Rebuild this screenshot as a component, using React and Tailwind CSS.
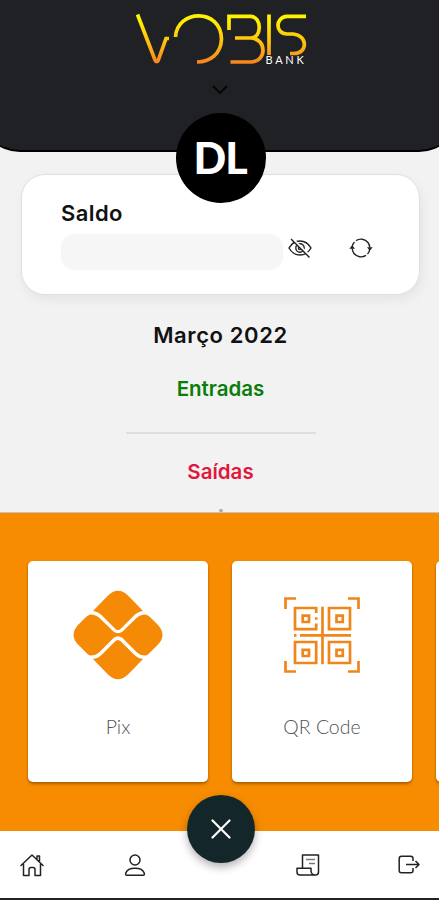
const Logo = () => (
  <div className="relative h-[66px] w-[180px]">
    <svg width="180" height="66" viewBox="130 0 180 66" fill="none" strokeWidth="3.7" stroke="url(#vobisGold)">
      <defs>
        <linearGradient id="vobisGold" gradientUnits="userSpaceOnUse" x1="0" y1="14" x2="0" y2="64">
          <stop offset="0.1" stopColor="#fff200" />
          <stop offset="0.55" stopColor="#ffc20e" />
          <stop offset="1" stopColor="#f58220" />
        </linearGradient>
      </defs>
      <path d="M137.500 14.500 L155.200 60.500 Q156.700 63 158.200 60.500 L166 38.500 H169" />
      <path d="M175.500 37 C177 9 221 8 221.500 39 C221 54 210 62 197 62" />
      <path d="M229 30 V16.400 H251 C262 17 262 38 251 38 H235 M251 38 C267 39 267 61.500 251 62 H230.500" />
      <path d="M269 14.500 V55" />
      <path d="M306 16.400 H287 C275 17 275 34 287 34 H293 C308 35 308 53.500 294 53.500 H290" />
    </svg>
    <span className="absolute top-[53px] left-[136px] font-['Lato',sans-serif] text-[11px] leading-[14px] font-normal tracking-[2.7px] text-white">BANK</span>
  </div>
);

const EyeOffIcon = () => (
  <svg width="24" height="20" viewBox="0 0 24 20" fill="none" stroke="#222" strokeWidth="1.4">
    <path d="M1 10 Q5 3 12 3 Q19 3 23 10 Q19 17 12 17 Q5 17 1 10Z" />
    <circle cx="12" cy="10" r="4.2" />
    <circle cx="12" cy="10" r="1.600" />
    <path d="M4 0.500 L22 18.500" stroke="#fff" strokeWidth="2.500" />
    <path d="M3 1 L21.500 19.500" />
  </svg>
);

const RefreshIcon = () => (
  <svg width="24" height="20" viewBox="0 0 24 20" fill="none" stroke="#222" strokeWidth="1.4">
    <path d="M3.200 9 C3.500 6.500 4.500 5 5.500 4 M7 2.600 C11 0.200 16 0.800 19 4.500 C20 6 20.700 7.500 20.800 9.500 M20.800 11 C20.500 13.500 19.500 15 18.500 16 M17 17.400 C13 19.800 8 19.200 5 15.500 C4 14 3.300 12.500 3.200 10.500" />
    <path d="M0.300 10.800 L3.200 7.200 L6 10.800Z M18 9.200 L20.800 12.800 L23.700 9.200Z" fill="#222" stroke="none" />
  </svg>
);

const PixIcon = () => (
  <svg width="90" height="90" viewBox="0 0 90 90" fill="#f58a07">
    <path d="M20 21 L34.500 6 Q45 -4.500 55.500 6 L70 21 Q65 21.500 61 25.500 L48 38.500 Q45 41.500 42 38.500 L29 25.500 Q25 21.500 20 21Z" />
    <path d="M20 69 L34.500 84 Q45 94.500 55.500 84 L70 69 Q65 68.500 61 64.500 L48 51.500 Q45 48.500 42 51.500 L29 64.500 Q25 68.500 20 69Z" />
    <path d="M17.500 24.500 Q23 24.500 26.500 28 L40.500 41.500 Q45 45 49.500 41.500 L63.500 28 Q67 24.500 72.500 24.500 Q75 25 77 27 L85 35 Q94 45 85 54.500 L77 62.500 Q75 65 72.500 65.500 Q67 65.500 63.500 62 L49.500 48 Q45 44.500 40.500 48 L26.500 62 Q23 65.500 17.500 65.500 Q15 65 13 62.500 L5 54.500 Q-4 45 5 35 L13 27 Q15 25 17.500 24.500Z" />
  </svg>
);

const QrIcon = () => (
  <svg width="76" height="76" viewBox="0 0 76 76" fill="none" stroke="#f0861a" strokeWidth="2.7">
    <path d="M1.500 12 V1.500 H12 M64 1.500 H74.500 V12 M74.500 64 V74.500 H64 M12 74.500 H1.500 V64" />
    <path d="M32.200 16 V11 H11 V32.200 H32.200 V26.500" />
    <path d="M45 11 H66 V32.200 H45Z M11 45 H32.200 V66 H11Z M45 45 H66 V66 H45Z" />
    <path d="M18.700 18.700 H25 V25 H18.700Z M52.500 18.700 H58.800 V25 H52.500Z M18.700 52.800 H25 V59 H18.700Z M52.500 52.800 H58.800 V59 H52.500Z" />
    <path d="M38.500 9.700 V67.300 M16 38.400 H67 M10 38.400 H12.500 M31 21.500 H33.500" />
  </svg>
);

const HomeIcon = () => (
  <svg width="24" height="24" viewBox="0 0 24 24" fill="none" stroke="#222" strokeWidth="1.5" strokeLinejoin="round" strokeLinecap="round">
    <path d="M1 12.500 L12 2 L23 12.500 M3.500 11 V22.500 H9 V16.500 Q9 14.500 11 14.500 H13 Q15 14.500 15 16.500 V22.500 H20.500 V11 M17 6 V3 H19.500 V8.500" />
  </svg>
);

const PersonIcon = () => (
  <svg width="22" height="24" viewBox="0 0 22 24" fill="none" stroke="#222" strokeWidth="1.5">
    <circle cx="11" cy="7" r="5" />
    <path d="M3 22.300 H19 Q21 22.300 20.200 20 C18 13.500 4 13.500 1.800 20 Q1 22.300 3 22.300Z" />
  </svg>
);

const ReceiptIcon = () => (
  <svg width="24" height="22" viewBox="0 0 24 22" fill="none" stroke="#222" strokeWidth="1.5" strokeLinejoin="round">
    <path d="M6.500 14 V1 H22.500 V18 Q22.500 21 19.500 21 H4 Q1 21 1 18 V14.300 H15 V17 Q15.500 20.800 19 21" />
    <path d="M10 5.500 H19 M13 9.500 H19" stroke="#777" />
  </svg>
);

const ExitIcon = () => (
  <svg width="23" height="20" viewBox="0 0 23 20" fill="none" stroke="#222" strokeWidth="1.5" strokeLinejoin="round">
    <path d="M15 6 V3.500 Q15 1.200 12.700 1.200 H3.500 Q1.200 1.200 1.200 3.500 V15.500 Q1.200 17.800 3.500 17.800 H12.700 Q15 17.800 15 15.500 V13" />
    <path d="M8 9.500 H21 M17.500 6 L21 9.500 L17.500 13" />
  </svg>
);

const ServiceCard = ({ label, children }) => (
  <div className="flex h-[221px] w-[180px] shrink-0 flex-col items-center rounded-[5px] bg-white shadow-[0_2px_3px_rgba(90,50,0,0.5)]">
    <div className="flex h-[147px] items-center justify-center">{children}</div>
    <p className="mt-[7px] font-['Lato',sans-serif] text-[19.5px] leading-6 font-light text-[#555]">{label}</p>
  </div>
);

export default function App() {
  return (
    <div className="flex h-[900px] w-full flex-col overflow-hidden bg-[#f2f2f2] font-['Inter','Open_Sans',sans-serif] text-[#111]">
      <header className="-mx-5 flex h-[152px] shrink-0 flex-col items-center rounded-b-[40px] border-b-2 border-black bg-[#202125]">
        <Logo />
        <svg className="mt-[19px]" width="16" height="10" viewBox="0 0 16 10" fill="none" stroke="#050505" strokeWidth="1.8">
          <path d="M1 1 L8 8 L15 1" />
        </svg>
      </header>

      {/* Avatar */}
      <div className="z-10 -mt-[39px] ml-[176px] flex h-[90px] w-[90px] shrink-0 items-center justify-center rounded-full bg-black">
        <span className="-mt-[2px] -ml-[2px] font-['Lato',sans-serif] text-[43px] leading-none font-black tracking-[-1px] text-white">DL</span>
      </div>

      {/* Balance */}
      <section className="mr-[19px] -mt-[29px] ml-[21px] h-[121px] shrink-0 rounded-[24px] border border-[#dfe1e1] bg-white pt-[24px] pl-[39px] shadow-[2px_5px_12px_rgba(0,0,0,0.06)]">
        <h2 className="text-[22px] leading-7 font-semibold tracking-[0.4px]">Saldo</h2>
        <div className="mt-[7px] flex items-center">
          <div className="h-9 w-[222px] rounded-[13px] bg-[#f6f6f6]" />
          <div className="mb-[8px] ml-[5px]"><EyeOffIcon /></div>
          <div className="mb-[8px] ml-[37px]"><RefreshIcon /></div>
        </div>
      </section>

      {/* Monthly summary */}
      <section className="flex h-[217px] shrink-0 flex-col items-center pt-[26px] pl-[2px] text-center">
        <h3 className="text-[22px] leading-7 font-semibold tracking-[0.6px]">Março 2022</h3>
        <p className="mt-[26px] text-[20.5px] leading-7 font-semibold text-[#0b7d0b]">Entradas</p>
        <hr className="mt-[29px] w-[190px] border-t-2 border-[#dedede]" />
        <p className="mt-[24px] text-[20.5px] leading-7 font-semibold text-[#e3173c]">Saídas</p>
        <span className="mt-[23px] h-[3px] w-1 rounded-full bg-[#aaa]" />
      </section>

      <section className="h-[319px] shrink-0 overflow-hidden border-t border-[#c9c2b8] bg-[#f78c00] pt-[48px] pl-[28px]">
        <div className="flex gap-6">
          <ServiceCard label="Pix"><PixIcon /></ServiceCard>
          <ServiceCard label="QR Code"><QrIcon /></ServiceCard>
          <ServiceCard label="" />
        </div>
      </section>

      <nav className="relative flex h-[69px] shrink-0 items-center justify-between border-b-2 border-[#222] bg-white pr-[18px] pl-5">
        <HomeIcon />
        <div className="ml-[50px]"><PersonIcon /></div>
        <div className="ml-[121px]"><ReceiptIcon /></div>
        <div className="ml-[48px]"><ExitIcon /></div>
        <button className="absolute -top-[36px] left-[187px] flex h-[68px] w-[68px] items-center justify-center rounded-full bg-[#13272a] shadow-[0_4px_8px_rgba(0,0,0,0.3)]">
          <svg width="20" height="20" viewBox="0 0 20 20" fill="none" stroke="#fff" strokeWidth="2.2" strokeLinecap="round">
            <path d="M1.500 1.500 L18.500 18.500 M18.500 1.500 L1.500 18.500" />
          </svg>
        </button>
      </nav>
    </div>
  );
}
